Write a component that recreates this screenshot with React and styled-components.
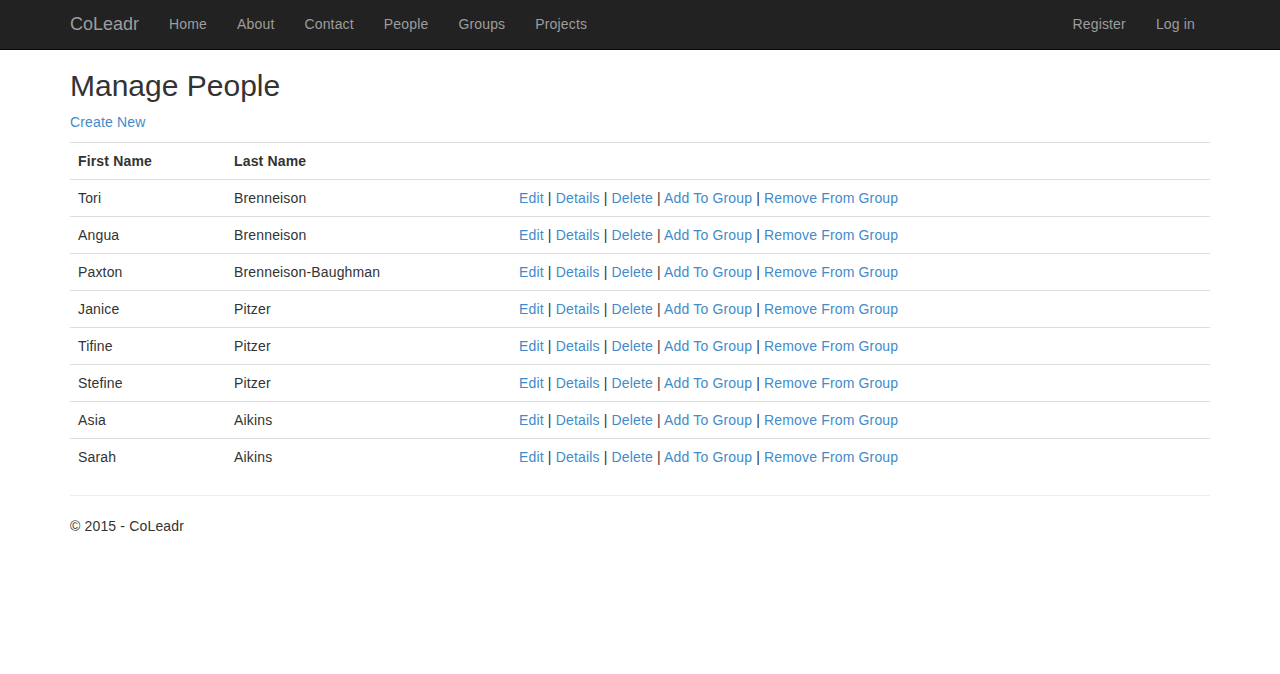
import React from "react";
import styled, { createGlobalStyle } from "styled-components";

const people = [
  { first: "Tori", last: "Brenneison" },
  { first: "Angua", last: "Brenneison" },
  { first: "Paxton", last: "Brenneison-Baughman" },
  { first: "Janice", last: "Pitzer" },
  { first: "Tifine", last: "Pitzer" },
  { first: "Stefine", last: "Pitzer" },
  { first: "Asia", last: "Aikins" },
  { first: "Sarah", last: "Aikins" },
];

const actions = ["Edit", "Details", "Delete", "Add To Group", "Remove From Group"];

const App = () => {
  return (
    <>
      <GlobalStyle />
      <Navbar>
        <NavContainer>
          <Brand href="#">CoLeadr</Brand>
          <NavList>
            {["Home", "About", "Contact", "People", "Groups", "Projects"].map((item) => (
              <li key={item}>
                <NavLink href="#">{item}</NavLink>
              </li>
            ))}
          </NavList>
          <NavList right>
            <li>
              <NavLink href="#">Register</NavLink>
            </li>
            <li>
              <NavLink href="#">Log in</NavLink>
            </li>
          </NavList>
        </NavContainer>
      </Navbar>

      <Content>
        <Title>Manage People</Title>
        <Para>
          <Link href="#">Create New</Link>
        </Para>
        <Table>
          <tbody>
            <tr>
              <Th width="156">First Name</Th>
              <Th width="285">Last Name</Th>
              <Th />
            </tr>
            {people.map((p, i) => (
              <tr key={i}>
                <Td>{p.first}</Td>
                <Td>{p.last}</Td>
                <Td>
                  {actions.map((a, j) => (
                    <React.Fragment key={a}>
                      {j > 0 && " | "}
                      <Link href="#">{a}</Link>
                    </React.Fragment>
                  ))}
                </Td>
              </tr>
            ))}
          </tbody>
        </Table>
        <Rule />
        <Footer>
          <Para>© 2015 - CoLeadr</Para>
        </Footer>
      </Content>
    </>
  );
};

export default App;

const GlobalStyle = createGlobalStyle`
  * { box-sizing: border-box; }
  body {
    margin: 0;
    padding-top: 50px;
    font-family: "Liberation Sans", Arial, Helvetica, sans-serif;
    font-size: 14px;
    line-height: 1.42857143;
    letter-spacing: 0.16px;
    color: #333;
    background: #fff;
  }
`;

const Navbar = styled.nav`
  position: fixed;
  top: 0;
  left: 0;
  right: 0;
  height: 50px;
  background: #222;
  border-bottom: 1px solid #080808;
  z-index: 10;
`;

const NavContainer = styled.div`
  width: 1170px;
  margin: 0 auto;
  padding: 0 15px;
  display: flex;
  align-items: stretch;
  height: 50px;
`;

const Brand = styled.a`
  display: block;
  margin-left: -15px;
  padding: 14px 15px 16px;
  height: 50px;
  font-size: 18px;
  line-height: 20px;
  letter-spacing: 0;
  color: #9d9d9d;
  text-decoration: none;
`;

const NavList = styled.ul`
  display: flex;
  list-style: none;
  margin: 0;
  padding: 0;
  margin-left: ${({ right }) => (right ? "auto" : "0")};
`;

const NavLink = styled.a`
  display: block;
  padding: 14px 15px 16px;
  line-height: 20px;
  color: #9d9d9d;
  text-decoration: none;
`;

const Content = styled.div`
  width: 1170px;
  margin: 0 auto;
  padding: 0 15px;
`;

const Title = styled.h2`
  margin: 19px 0 10px;
  font-size: 30px;
  font-weight: 500;
  line-height: 1.1;
  letter-spacing: 0;
`;

const Para = styled.p`
  margin: 0 0 10px;
`;

const Link = styled.a`
  color: #428bca;
  text-decoration: none;
`;

const Table = styled.table`
  width: 100%;
  border-collapse: collapse;
  border-spacing: 0;
  margin-bottom: 20px;
  table-layout: fixed;
`;

const Th = styled.th`
  text-align: left;
  font-weight: bold;
  padding: 8px;
  line-height: 1.42857143;
  border-top: 1px solid #ddd;
  vertical-align: top;
`;

const Td = styled.td`
  padding: 8px;
  line-height: 1.42857143;
  border-top: 1px solid #ddd;
  vertical-align: top;
`;

const Rule = styled.hr`
  margin: 20px 0;
  border: 0;
  border-top: 1px solid #eee;
`;

const Footer = styled.footer``;
